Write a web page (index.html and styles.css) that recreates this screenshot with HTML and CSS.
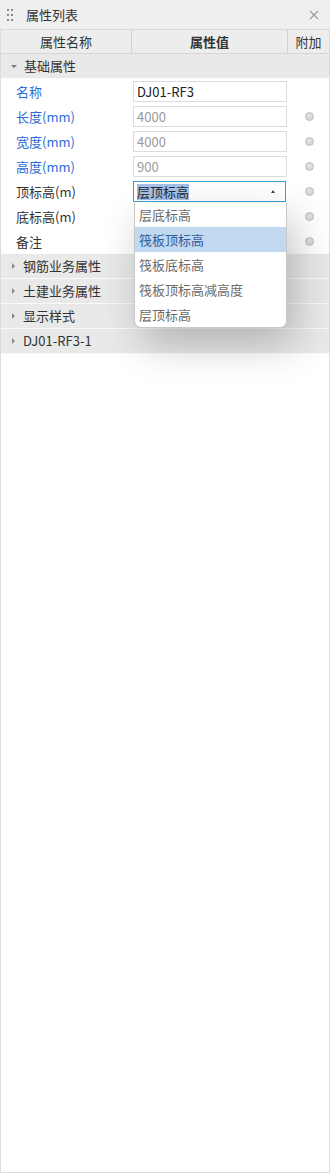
FILE: index.html
```html
<!DOCTYPE html>
<html lang="zh">
<head>
<meta charset="utf-8">
<title>属性列表</title>
<link rel="stylesheet" href="styles.css">
</head>
<body>
<div class="panel">
  <div class="titlebar">
    <span class="grip"><i></i><i></i><i></i><i></i><i></i><i></i></span>
    <span class="title">属性列表</span>
    <svg class="close" width="10" height="10" viewBox="0 0 10 10"><path d="M1 1L9 9M9 1L1 9" stroke="#9a9a9a" stroke-width="1.1" fill="none"/></svg>
  </div>
  <div class="header">
    <div class="hcell c1">属性名称</div>
    <div class="hcell c2 bold">属性值</div>
    <div class="hcell c3">附加</div>
  </div>
  <div class="group"><span class="tri down"></span>基础属性</div>
  <div class="row">
    <div class="label blue">名称</div>
    <div class="val"><div class="input dark">DJ01-RF3</div></div>
    <div class="extra"></div>
  </div>
  <div class="row">
    <div class="label blue">长度(mm)</div>
    <div class="val"><div class="input">4000</div></div>
    <div class="extra"><span class="radio"></span></div>
  </div>
  <div class="row">
    <div class="label blue">宽度(mm)</div>
    <div class="val"><div class="input">4000</div></div>
    <div class="extra"><span class="radio"></span></div>
  </div>
  <div class="row">
    <div class="label blue">高度(mm)</div>
    <div class="val"><div class="input">900</div></div>
    <div class="extra"><span class="radio"></span></div>
  </div>
  <div class="row">
    <div class="label">顶标高(m)</div>
    <div class="val"><div class="select"><span class="sel">层顶标高</span><span class="arrow"></span></div></div>
    <div class="extra"><span class="radio"></span></div>
  </div>
  <div class="row">
    <div class="label">底标高(m)</div>
    <div class="val"></div>
    <div class="extra"><span class="radio"></span></div>
  </div>
  <div class="row">
    <div class="label">备注</div>
    <div class="val"></div>
    <div class="extra"><span class="radio"></span></div>
  </div>
  <div class="group"><span class="tri right"></span>钢筋业务属性</div>
  <div class="group"><span class="tri right"></span>土建业务属性</div>
  <div class="group"><span class="tri right"></span>显示样式</div>
  <div class="group"><span class="tri right"></span>DJ01-RF3-1</div>

  <ul class="dropdown">
    <li class="first">层底标高</li>
    <li class="active">筏板顶标高</li>
    <li>筏板底标高</li>
    <li>筏板顶标高减高度</li>
    <li>层顶标高</li>
  </ul>
</div>
</body>
</html>
```
FILE: styles.css
```css
* { box-sizing: border-box; }
html, body { margin: 0; padding: 0; background: #fff; }
body { font-family: "Noto Sans CJK SC", "Noto Sans", sans-serif; font-size: 13px; color: #333; }

.panel {
  position: relative;
  width: 330px;
  height: 1173px;
  border: 1px solid #dcdcdc;
  border-top: none;
  background: #fff;
}

.titlebar {
  height: 30px;
  background: #efefef;
  display: flex;
  align-items: center;
  margin: 0 -1px;
  padding: 0 0 0 7px;
  border-bottom: 1px solid #dadada;
}
.grip {
  display: grid;
  grid-template-columns: 2px 2px;
  grid-template-rows: 2px 2px 2px;
  column-gap: 2px;
  row-gap: 3px;
  margin-top: 1px;
}
.grip i { display: block; width: 2px; height: 2px; background: #8a8a8a; }
.title { margin-left: 13px; line-height: 30px; color: #333; }
.close { margin-left: auto; margin-right: 11px; }

.header {
  display: grid;
  grid-template-columns: 131px 156px 1fr;
  height: 24px;
  background: #ededed;
  border-bottom: 1px solid #d6d6d6;
}
.hcell {
  text-align: center;
  line-height: 23px;
  color: #333;
}
.c1, .c2 { border-right: 1px solid #d2d2d2; }
.bold { font-weight: bold; }

.group {
  height: 25px;
  line-height: 24px;
  background: #e9e9e9;
  border-bottom: 1px solid #fafafa;
  padding-left: 10px;
  display: flex;
  align-items: center;
  color: #333;
}
.tri { display: inline-block; width: 0; height: 0; }
.tri.down {
  border-left: 3px solid transparent;
  border-right: 3px solid transparent;
  border-top: 3px solid #777;
  margin-right: 7px;
  margin-left: 0;
}
.tri.right {
  border-top: 3px solid transparent;
  border-bottom: 3px solid transparent;
  border-left: 3px solid #888;
  margin-left: 1px;
  margin-right: 8px;
}

.row {
  display: grid;
  grid-template-columns: 131px 156px 1fr;
  height: 25px;
  align-items: center;
}
.label { padding-left: 15px; color: #333; }
.label.blue { color: #2d6bd6; }
.val { padding-left: 1px; padding-right: 1px; }
.input {
  height: 21px;
  border: 1px solid #dcdcdc;
  padding-left: 3px;
  line-height: 19px;
  color: #9a9a9a;
  background: #fff;
}
.input.dark { color: #222; }
.select {
  height: 21px;
  border: 1px solid #3ea0d6;
  padding-left: 3px;
  display: flex;
  align-items: center;
  color: #222;
  margin-right: 1px;
}
.sel { background: #a6c0e6; line-height: 16px; color: #1e2a3a; }
.arrow {
  margin-left: auto;
  margin-right: 10px;
  width: 0; height: 0;
  border-left: 2px solid transparent;
  border-right: 2px solid transparent;
  border-bottom: 3px solid #444;
}
.extra { display: flex; justify-content: flex-end; padding-right: 15px; }
.radio {
  width: 9px; height: 9px;
  border-radius: 50%;
  border: 1px solid #bdbdbd;
  background: radial-gradient(circle at 50% 40%, #e4e4e4, #cfcfcf);
}

.dropdown {
  position: absolute;
  left: 133px;
  top: 203px;
  width: 153px;
  margin: 0;
  padding: 0;
  list-style: none;
  background: #fff;
  border: 1px solid #c8c8c8;
  border-top: none;
  border-radius: 0 0 7px 7px;
  box-shadow: 8px 16px 40px rgba(0,0,0,0.24);
  overflow: hidden;
}
.dropdown li {
  height: 25px;
  line-height: 25px;
  padding-left: 4px;
  color: #6a6a6a;
}
.dropdown li.first { height: 24px; line-height: 24px; }
.dropdown li.active { background: #c0d8f0; color: #2e5f9a; }
```
